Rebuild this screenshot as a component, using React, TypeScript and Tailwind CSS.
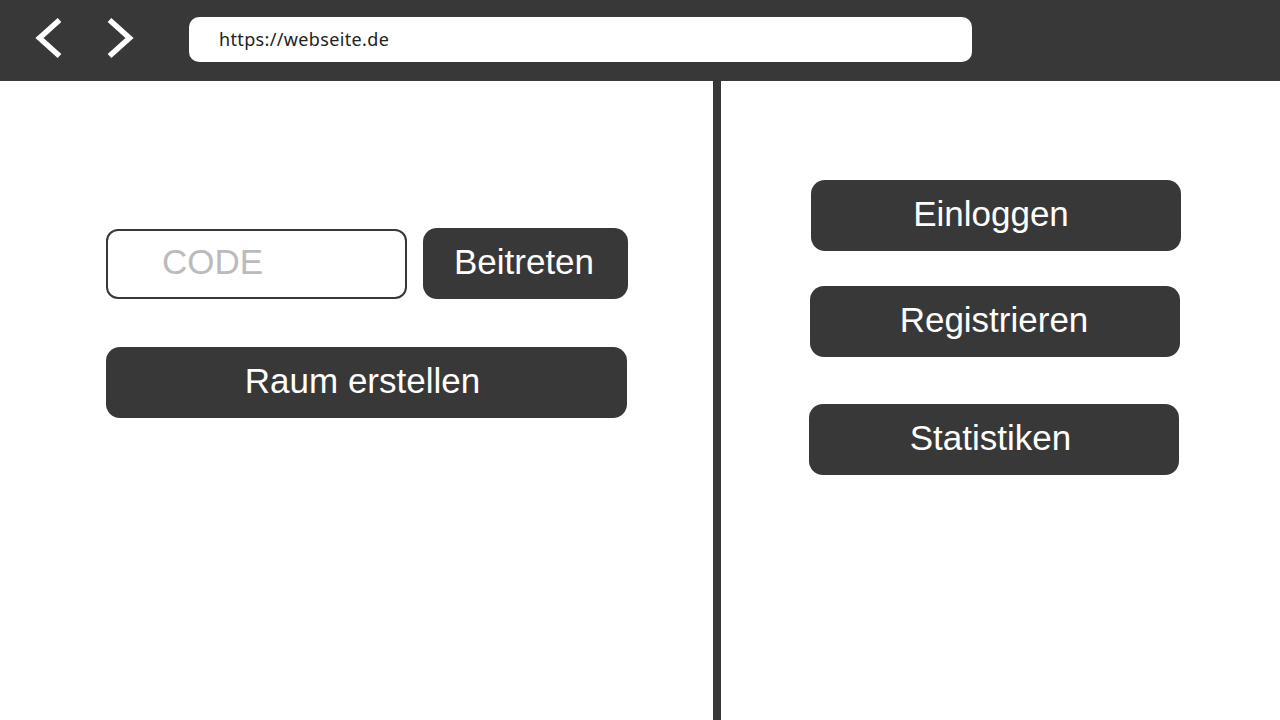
import React from "react";

const btn =
  "flex items-center justify-center bg-[#383838] text-white text-[35px] leading-none pb-[4px] font-['Liberation_Sans',Arial,sans-serif]";

export default function App() {
  return (
    <div className="w-[1280px] h-[720px] flex flex-col bg-white overflow-hidden">
      <header className="h-[81px] bg-[#383838] flex items-center shrink-0">
        <svg width="189" height="81" viewBox="0 0 189 81" className="shrink-0">
          <polyline points="59.5,20 39.5,38 59.5,56" fill="none" stroke="#ffffff" strokeWidth="5.5" />
          <polyline points="109.5,20 129.5,38 109.5,56" fill="none" stroke="#ffffff" strokeWidth="5.5" />
        </svg>
        <div className="w-[783px] h-[45px] bg-white rounded-[10px] flex items-center pl-[30px] mt-[-3px] text-[18px] tracking-[0.35px] text-[#222] font-['Noto_Sans',sans-serif]">
          https://webseite.de
        </div>
      </header>
      <main className="flex flex-1">
        <section className="w-[713px] pt-[147px] pl-[106px]">
          <div className="flex items-center gap-[16px]">
            <div className="w-[301px] h-[70px] border-2 border-[#383838] rounded-[12px] flex items-center pl-[54px] pb-[4px] text-[35px] leading-none text-[#bbbbbb] font-['Liberation_Sans',Arial,sans-serif]">
              CODE
            </div>
            <div className={`${btn} pr-[3px] w-[205px] h-[71px] rounded-[14px]`}>Beitreten</div>
          </div>
          <div className={`${btn} pr-[8px] mt-[48px] w-[521px] h-[71px] rounded-[14px]`}>Raum erstellen</div>
        </section>
        <div className="w-[8px] bg-[#383838]" />
        <section className="flex-1 pt-[99px] flex flex-col">
          <div className={`${btn} pr-[10px] ml-[90px] w-[370px] h-[71px] rounded-[14px]`}>Einloggen</div>
          <div className={`${btn} pr-[2px] ml-[89px] mt-[35px] w-[370px] h-[71px] rounded-[14px]`}>Registrieren</div>
          <div className={`${btn} pr-[7px] ml-[88px] mt-[47px] w-[370px] h-[71px] rounded-[14px]`}>Statistiken</div>
        </section>
      </main>
    </div>
  );
}
